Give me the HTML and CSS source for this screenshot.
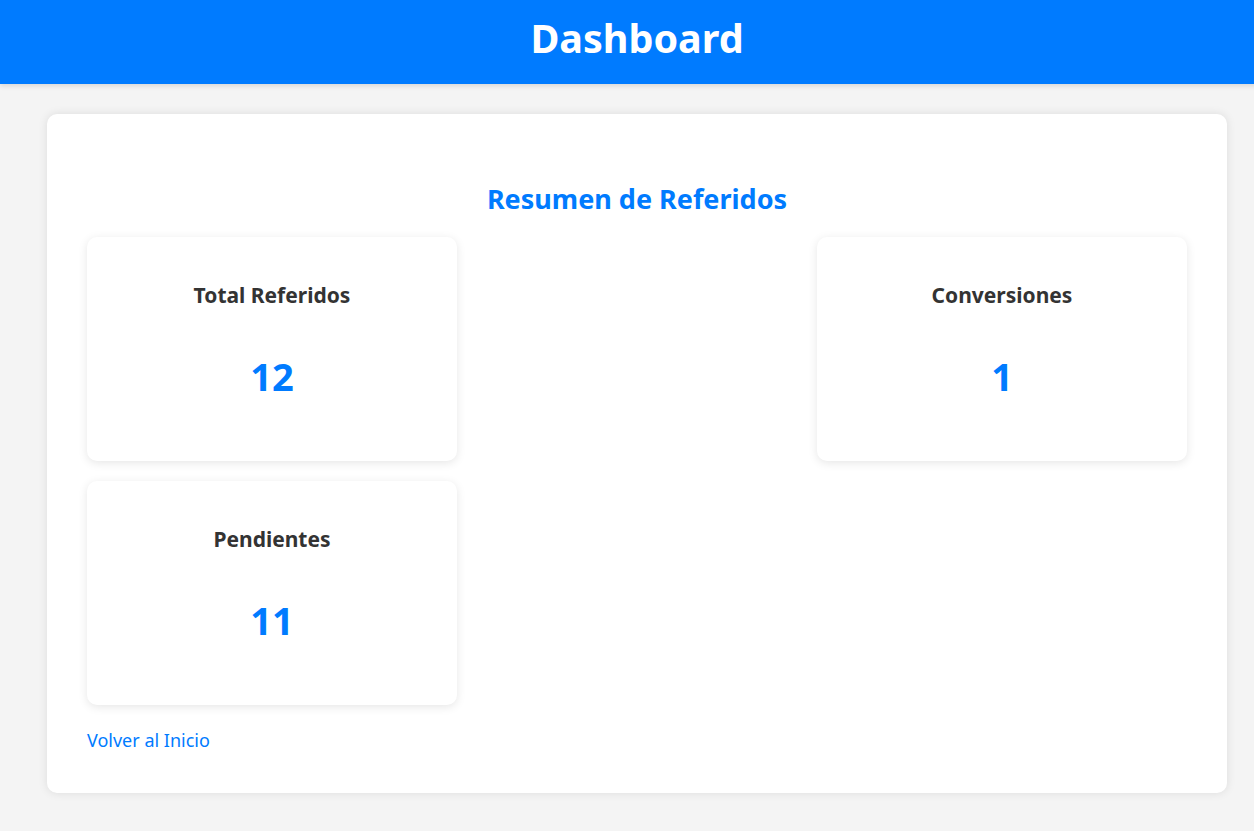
FILE: index.html
```html
<!DOCTYPE html>
<html lang="es">
<head>
<meta charset="utf-8">
<title>Dashboard</title>
<link rel="stylesheet" href="styles.css">
</head>
<body>
<div class="page">
  <header class="topbar">
    <h1 class="topbar-title">Dashboard</h1>
  </header>
  <main class="container">
    <h2 class="section-title">Resumen de Referidos</h2>
    <div class="stats">
      <div class="stat-card">
        <h3 class="stat-label">Total Referidos</h3>
        <p class="stat-value">12</p>
      </div>
      <div class="stat-card">
        <h3 class="stat-label">Conversiones</h3>
        <p class="stat-value">1</p>
      </div>
      <div class="stat-card">
        <h3 class="stat-label">Pendientes</h3>
        <p class="stat-value">11</p>
      </div>
    </div>
    <a class="back-link" href="#">Volver al Inicio</a>
  </main>
</div>
</body>
</html>
```
FILE: styles.css
```css
html, body {
  margin: 0;
  padding: 0;
  background: #f4f4f4;
  overflow-x: hidden;
}
body {
  font-family: "Noto Sans", "Open Sans", sans-serif;
  color: #333;
}
.page {
  width: 1274px;
  min-height: 831px;
}
.topbar {
  background: #007bff;
  height: 84px;
  box-sizing: border-box;
  padding-bottom: 7px;
  display: flex;
  align-items: center;
  justify-content: center;
  box-shadow: 0 2px 5px rgba(0, 0, 0, 0.12);
}
.topbar-title {
  margin: 0;
  color: #fff;
  font-size: 39.5px;
  font-weight: 700;
  line-height: 1;
}
.container {
  width: 1180px;
  box-sizing: border-box;
  margin: 30px auto 0;
  padding: 40px 40px 41px;
  background: #fff;
  border-radius: 10px;
  box-shadow: 0 0 10px rgba(0, 0, 0, 0.1);
}
.section-title {
  margin: 29px 0 23px;
  text-align: center;
  color: #007bff;
  font-size: 27px;
  font-weight: 700;
  line-height: 31px;
}
.stats {
  display: flex;
  flex-wrap: wrap;
  justify-content: space-between;
  row-gap: 20px;
}
.stat-card {
  width: 370px;
  height: 224px;
  box-sizing: border-box;
  padding: 46px 20px 0;
  background: #fff;
  border-radius: 10px;
  box-shadow: 0 2px 10px rgba(0, 0, 0, 0.1);
  text-align: center;
}
.stat-label {
  margin: 0;
  font-size: 21px;
  font-weight: 700;
  line-height: 24px;
  color: #333;
}
.stat-value {
  margin: 46px 0 0;
  font-size: 38px;
  font-weight: 700;
  line-height: 46px;
  color: #007bff;
}
.back-link {
  display: block;
  margin-top: 24px;
  width: max-content;
  font-size: 18px;
  line-height: 23px;
  color: #007bff;
  text-decoration: none;
}
```
